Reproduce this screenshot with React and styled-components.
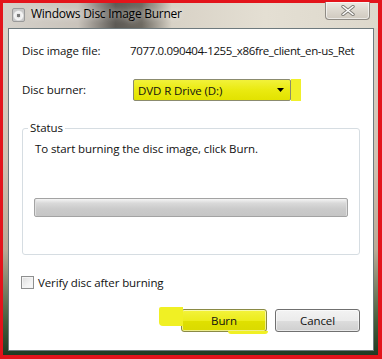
import React from 'react';
import styled, { createGlobalStyle } from 'styled-components';

const GlobalStyle = createGlobalStyle`
  html, body {
    margin: 0;
    padding: 0;
    background: #fff;
  }
  body {
    font-family: 'Segoe UI', 'Open Sans', 'Liberation Sans', sans-serif;
    font-size: 11.5px;
    letter-spacing: -0.1px;
    color: #111;
  }
`;

const Shot = styled.div`
  width: 382px;
  height: 359px;
  box-sizing: border-box;
  border: 3px solid #e3141b;
  border-right-width: 4px;
  border-bottom-width: 4px;
  display: flex;
  flex-direction: column;
  background: linear-gradient(
    to bottom,
    #dcd6cc 0%,
    #cfc2b3 45%,
    #b9ab98 70%,
    #47603f 90%,
    #1f3a22 100%
  );
`;

const TitleBar = styled.div`
  height: 25px;
  flex: none;
  display: flex;
  align-items: flex-start;
  padding: 0 6px 0 9px;
  background: linear-gradient(
    to right,
    #d5d1ca 0%,
    #c9c3bb 20%,
    #5d5a55 30%,
    #6e6a62 37%,
    #d8d2c6 45%,
    #e4dfd3 70%,
    #ddd8cc 100%
  );
`;

const AppIcon = styled.div`
  width: 11px;
  height: 12px;
  margin-top: 5px;
  border-radius: 2px;
  background: radial-gradient(circle at 50% 55%, #7a7a7a 0 1.5px, #e8e8e8 2px, #f7f7f7 4px, #c9c9c9 5.5px);
  border: 1px solid #9a9a9a;
  flex: none;
`;

const Title = styled.div`
  margin: 3px 0 0 6px;
  font-size: 12px;
  letter-spacing: -0.25px;
  line-height: 16px;
  color: #000;
  text-shadow: 0 0 6px rgba(255, 255, 255, 0.9);
  flex: 1;
`;

const CloseButton = styled.div`
  width: 43px;
  height: 17px;
  margin: -1px 2px 0 0;
  border: 1px solid #8f8b84;
  border-top: none;
  border-radius: 0 0 4px 4px;
  background: linear-gradient(to bottom, #ece9e3 0%, #ddd8cf 50%, #cfc9bf 100%);
  box-shadow: inset 0 0 0 1px rgba(255, 255, 255, 0.6);
  display: flex;
  align-items: center;
  justify-content: center;
`;

const Client = styled.div`
  flex: 1;
  margin: 0 4px 4px 5px;
  border: 1px solid #6e7a7e;
  background: #fff;
  padding: 12px 13px 0 13px;
  display: flex;
  flex-direction: column;
`;

const Row = styled.div`
  display: grid;
  grid-template-columns: 108px 1fr;
  align-items: center;
  height: ${(p) => p.h}px;
  margin-top: ${(p) => p.top || 0}px;
`;

const Label = styled.div`
  line-height: 16px;
  white-space: nowrap;
  overflow: hidden;
  letter-spacing: ${(p) => (p.tight ? '-0.35px' : 'inherit')};
`;

const Select = styled.div`
  position: relative;
  margin-left: 3px;
  width: 158px;
  height: 22px;
  box-sizing: border-box;
  border: 1px solid #8b8b6e;
  border-radius: 2px;
  background: linear-gradient(to bottom, #f2f23a 0%, #eaea10 50%, #e2e200 100%);
  display: flex;
  align-items: center;
  justify-content: space-between;
  padding: 0 6px 0 4px;

  &::after {
    content: '';
    position: absolute;
    left: 157px;
    top: -1px;
    width: 10px;
    height: 22px;
    background: #f0f02a;
  }
`;

const Group = styled.fieldset`
  margin: 19px 0 0 0;
  padding: 5px 11px 37px 11px;
  border: 1px solid #d6dde2;
  border-radius: 3px;
  min-width: 0;
`;

const Legend = styled.legend`
  padding: 0 2px;
  margin-left: -6px;
  line-height: 16px;
`;

const StatusText = styled.div`
  line-height: 16px;
  margin-left: 1px;
`;

const Progress = styled.div`
  margin-top: 41px;
  height: 19px;
  box-sizing: border-box;
  border: 1px solid #a3a3a3;
  border-radius: 2px;
  background: linear-gradient(
    to bottom,
    #f4f4f4 0%,
    #d9d9d9 25%,
    #cacaca 60%,
    #c6c6c6 100%
  );
  box-shadow: inset 1px 0 0 #e0e0e0, inset -1px 0 0 #e0e0e0;
`;

const CheckRow = styled.label`
  display: flex;
  align-items: center;
  gap: 4px;
  margin: 21px 0 0 -1px;
  height: 13px;
  line-height: 16px;
`;

const Box = styled.span`
  width: 13px;
  height: 13px;
  box-sizing: border-box;
  border: 1px solid #8e8f8f;
  background: linear-gradient(135deg, #dcdcdc 0%, #f3f3f3 60%, #fafafa 100%);
  box-shadow: inset 0 0 0 1px #f4f4f4;
  flex: none;
`;

const Buttons = styled.div`
  display: flex;
  justify-content: flex-end;
  gap: 8px;
  margin-top: 20px;
`;

const Button = styled.div`
  position: relative;
  width: ${(p) => p.w}px;
  height: 23px;
  box-sizing: border-box;
  border: 1px solid ${(p) => (p.marked ? '#8a8a45' : '#707070')};
  border-radius: 3px;
  display: flex;
  align-items: center;
  justify-content: center;
  line-height: 16px;
  background: ${(p) =>
    p.marked
      ? 'linear-gradient(to bottom, #f3f33c 0%, #ecec1c 50%, #e0e000 51%, #dada00 100%)'
      : 'linear-gradient(to bottom, #f3f3f3 0%, #ebebeb 50%, #dddddd 51%, #cfcfcf 100%)'};
  box-shadow: inset 0 0 0 1px rgba(255, 255, 255, 0.55);

  ${(p) =>
    p.marked &&
    `
    &::before {
      content: '';
      position: absolute;
      left: -23px;
      top: -3px;
      width: 24px;
      height: 19px;
      background: #f0f024;
      border-radius: 2px 0 0 4px;
    }
    &::after {
      content: '';
      position: absolute;
      right: -2px;
      bottom: -3px;
      width: 40px;
      height: 3px;
      background: #f0f024;
      border-radius: 0 0 3px 3px;
    }
  `}
`;

const Arrow = () => (
  <svg width="7" height="4" viewBox="0 0 7 4">
    <path d="M0 0h7L3.5 4z" fill="#000" />
  </svg>
);

const CloseGlyph = () => (
  <svg width="14" height="11" viewBox="0 0 14 11">
    <path
      d="M2 1.5L12 9.5M12 1.5L2 9.5"
      stroke="#7d7a74"
      strokeWidth="3.4"
      strokeLinecap="round"
    />
    <path
      d="M2 1.5L12 9.5M12 1.5L2 9.5"
      stroke="#fff"
      strokeWidth="1.6"
      strokeLinecap="round"
    />
  </svg>
);

export default function App() {
  return (
    <>
      <GlobalStyle />
      <Shot>
        <TitleBar>
          <AppIcon />
          <Title>Windows Disc Image Burner</Title>
          <CloseButton>
            <CloseGlyph />
          </CloseButton>
        </TitleBar>
        <Client>
          <Row h={20}>
            <Label>Disc image file:</Label>
            <Label tight>7077.0.090404-1255_x86fre_client_en-us_Ret</Label>
          </Row>
          <Row h={22} top={18}>
            <Label>Disc burner:</Label>
            <Select>
              <span>DVD R Drive (D:)</span>
              <Arrow />
            </Select>
          </Row>
          <Group>
            <Legend>Status</Legend>
            <StatusText>To start burning the disc image, click Burn.</StatusText>
            <Progress />
          </Group>
          <CheckRow>
            <Box />
            <span>Verify disc after burning</span>
          </CheckRow>
          <Buttons>
            <Button w={86} marked>
              Burn
            </Button>
            <Button w={85}>Cancel</Button>
          </Buttons>
        </Client>
      </Shot>
    </>
  );
}
